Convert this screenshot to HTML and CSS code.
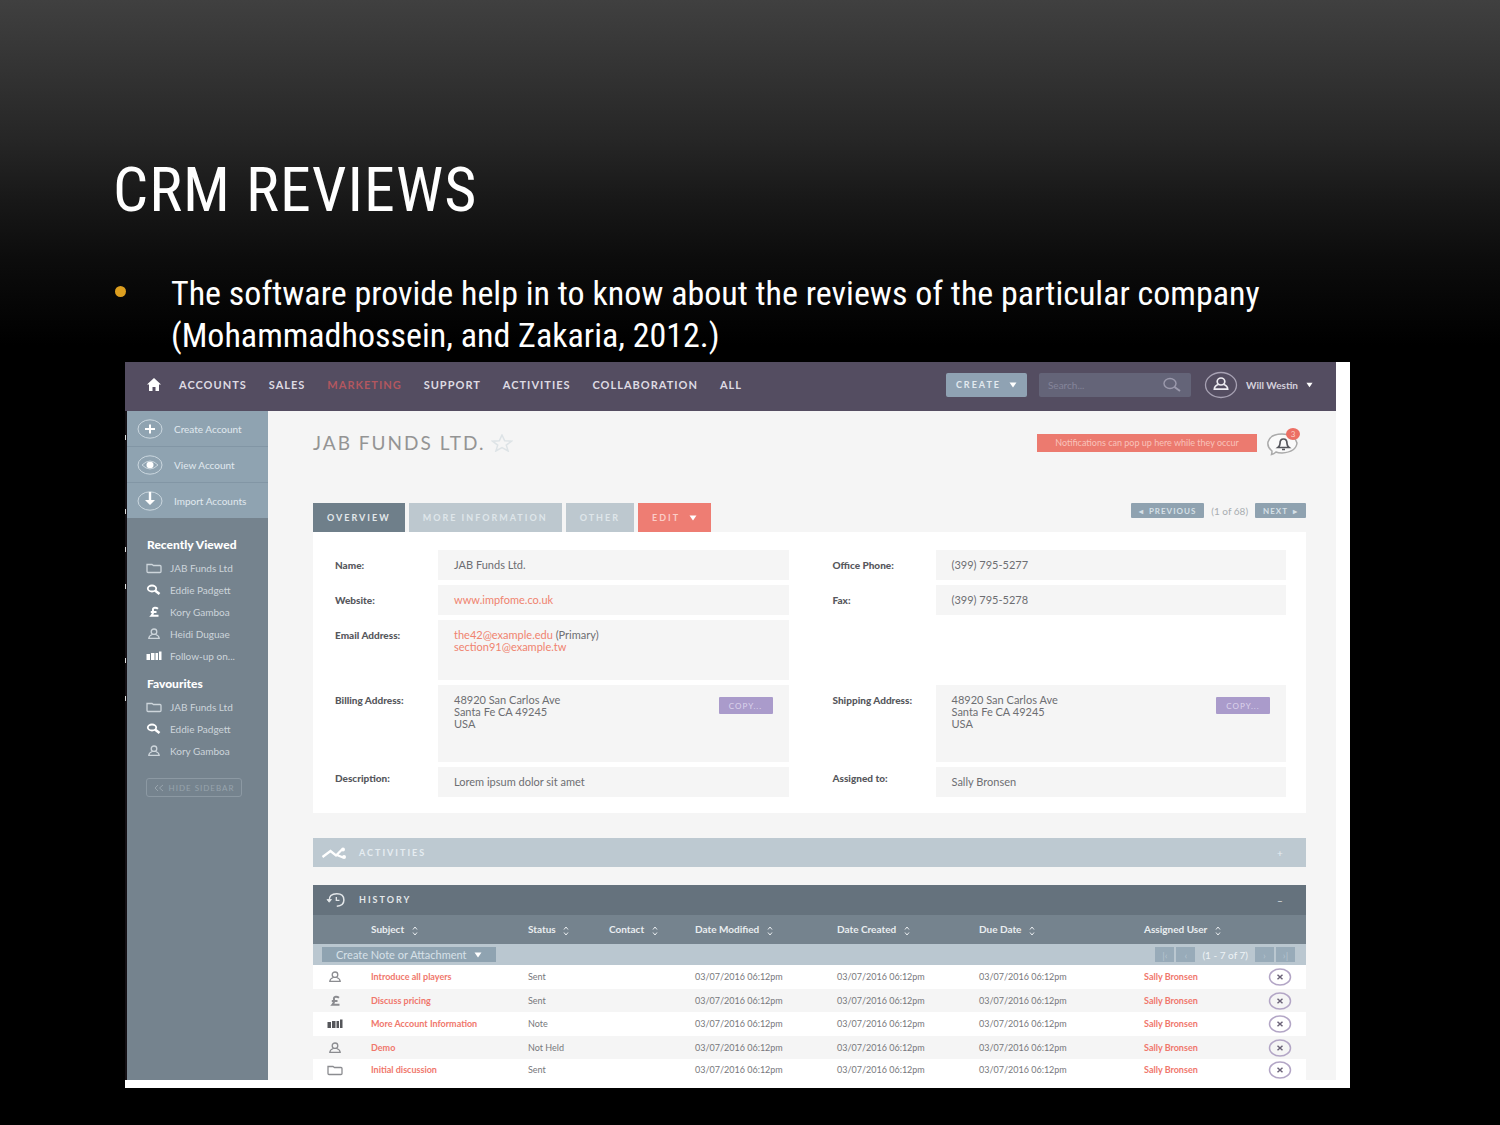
FILE: index.html
```html
<!DOCTYPE html>
<html lang="en">
<head>
<meta charset="utf-8">
<title>CRM Reviews</title>
<link rel="stylesheet" href="styles.css">
</head>
<body>
<svg class="sprite" aria-hidden="true">
  <symbol id="folder" viewBox="0 0 16 12"><path d="M1 2.5h5l1.5 1H14q1 0 1 1V9.5q0 1-1 1H2q-1 0-1-1z" fill="none" stroke="currentColor" stroke-width="1.3"/></symbol>
  <symbol id="key" viewBox="0 0 16 12"><ellipse cx="6" cy="4.500" rx="4.200" ry="3" fill="none" stroke="currentColor" stroke-width="1.800"/><path d="M9 6.500l4.500 3.500" stroke="currentColor" stroke-width="2.600"/></symbol>
  <symbol id="pound" viewBox="0 0 16 12"><path d="M12 2.800Q10.500 1.600 8.700 1.800 6.500 2 7 4.500q.5 3-1.500 5.200h7M4.800 6h5.700" fill="none" stroke="currentColor" stroke-width="2"/></symbol>
  <symbol id="person" viewBox="0 0 16 12"><ellipse cx="8" cy="3.700" rx="2.800" ry="2.700" fill="none" stroke="currentColor" stroke-width="1.300"/><path d="M6.300 6.500Q3 7.500 2.800 10.300H13.200Q13 7.500 9.700 6.500" fill="none" stroke="currentColor" stroke-width="1.300"/></symbol>
  <symbol id="bars" viewBox="0 0 16 12"><path d="M.5 4H4v6H.5zM5 3h3.500v7H5zM9.500 3H12v7H9.500zM13 1.500h2.500V10H13z" fill="currentColor"/></symbol>
  <symbol id="remove" viewBox="0 0 24 18"><ellipse cx="12" cy="9" rx="10.500" ry="8" fill="none" stroke="#b3a6c6" stroke-width="1.500"/><path d="M9.500 6.800l5 4.400m0-4.400l-5 4.400" stroke="#6b6378" stroke-width="1.500"/></symbol>
  <symbol id="sort" viewBox="0 0 6 10"><path d="M1 3.500L3 1l2 2.500M1 6.500L3 9l2-2.500" fill="none" stroke="currentColor"/></symbol>
  <symbol id="caret" viewBox="0 0 8 6"><path d="M.5.5h7L4 5.500z" fill="currentColor"/></symbol>
</svg>

<main class="slide">
  <h1 class="slide-title">CRM REVIEWS</h1>
  <ul class="slide-points">
    <li>The software provide help in to know about the reviews of the particular company (Mohammadhossein, and Zakaria, 2012.)</li>
  </ul>

  <div class="shot">
    <div class="app">
      <header class="topbar">
        <nav class="nav">
          <a class="home" href="#" aria-label="Home"><svg viewBox="0 0 14 13"><path d="M7 0l7 6.500h-2V13H8.500V9h-3v4H2V6.500H0z" fill="#fff"/></svg></a>
          <a href="#">ACCOUNTS</a><a href="#">SALES</a><a class="current" href="#">MARKETING</a><a href="#">SUPPORT</a><a href="#">ACTIVITIES</a><a href="#">COLLABORATION</a><a href="#">ALL</a>
        </nav>
        <div class="tools">
          <button class="create" type="button">CREATE <svg class="caret"><use href="#caret"/></svg></button>
          <div class="search">
            <input type="text" placeholder="Search..." aria-label="Search">
            <svg viewBox="0 0 20 16"><ellipse cx="8" cy="6.500" rx="6" ry="5" fill="none" stroke="#9c9aad" stroke-width="1.400"/><path d="M12.500 10l5.500 4" stroke="#9c9aad" stroke-width="2"/></svg>
          </div>
          <button class="user" type="button">
            <svg viewBox="0 0 34 28"><ellipse cx="17" cy="14" rx="15.500" ry="12.500" fill="none" stroke="#a7a1b3" stroke-width="1.300"/><ellipse cx="17" cy="10.500" rx="3.800" ry="3.500" fill="none" stroke="#eeecf2" stroke-width="1.700"/><path d="M14.500 13.500Q10.500 14.500 10.300 18.200H23.700Q23.500 14.500 19.500 13.500" fill="none" stroke="#eeecf2" stroke-width="1.700"/></svg>
            Will Westin <svg class="caret"><use href="#caret"/></svg>
          </button>
        </div>
      </header>

      <div class="body">
        <aside class="sidebar">
          <ul class="actions">
            <li><a href="#"><svg viewBox="0 0 26 20"><ellipse cx="13" cy="10" rx="12" ry="9.200" fill="none" stroke="#cbd7df"/><path d="M13 5.500v9M8 10h10" stroke="#fff" stroke-width="2"/></svg>Create Account</a></li>
            <li><a href="#"><svg viewBox="0 0 26 20"><ellipse cx="13" cy="10" rx="12" ry="9.200" fill="none" stroke="#cbd7df"/><path d="M5 10q8-8 16 0-8 8-16 0z" fill="none" stroke="#cbd7df"/><ellipse cx="13" cy="10" rx="3.500" ry="3.300" fill="#fff"/></svg>View Account</a></li>
            <li><a href="#"><svg viewBox="0 0 26 20"><ellipse cx="13" cy="10" rx="12" ry="9.200" fill="none" stroke="#cbd7df"/><path d="M11.800 1h2.400v8H18l-5 5-5-5h3.800z" fill="#fff"/></svg>Import Accounts</a></li>
          </ul>
          <h2>Recently Viewed</h2>
          <ul class="links">
            <li><a href="#"><svg><use href="#folder"/></svg>JAB Funds Ltd</a></li>
            <li><a href="#"><svg class="strong"><use href="#key"/></svg>Eddie Padgett</a></li>
            <li><a href="#"><svg class="strong"><use href="#pound"/></svg>Kory Gamboa</a></li>
            <li><a href="#"><svg><use href="#person"/></svg>Heidi Duguae</a></li>
            <li><a href="#"><svg class="strong"><use href="#bars"/></svg>Follow-up on...</a></li>
          </ul>
          <h2>Favourites</h2>
          <ul class="links">
            <li><a href="#"><svg><use href="#folder"/></svg>JAB Funds Ltd</a></li>
            <li><a href="#"><svg class="strong"><use href="#key"/></svg>Eddie Padgett</a></li>
            <li><a href="#"><svg><use href="#person"/></svg>Kory Gamboa</a></li>
          </ul>
          <button class="hide" type="button"><svg viewBox="0 0 10 8"><path d="M4 1L1 4l3 3M9 1L5.500 4 9 7" fill="none" stroke="currentColor"/></svg>HIDE SIDEBAR</button>
        </aside>

        <div class="content">
          <div class="heading">
            <h2>JAB FUNDS LTD.</h2>
            <svg class="star" viewBox="0 0 22 18"><path d="M11 1l2.700 5.700 6.800.5-5.200 3.900 1.800 5.900-6.100-3.300-6.100 3.300 1.800-5.900L1.500 7.200l6.800-.5z" fill="none" stroke="#dde3e6" stroke-width="1.500"/></svg>
            <div class="alert">Notifications can pop up here while they occur</div>
            <button class="bell" type="button" aria-label="Notifications">
              <svg viewBox="0 0 34 28"><path d="M6 22Q1 18 2 13 4 5 16 5t15 9q-1 9-15 10-4 0-6-1-2 2-4.500 2.500Q6 24 6 22z" fill="#fafafa" stroke="#aaa" stroke-width="1.500"/><path d="M12 18.500h11Q21 17 21 14.500q0-4.500-3.500-4.500T14 14.500Q14 17 12 18.500zM16 20.500h3" fill="none" stroke="#55565c" stroke-width="1.700"/></svg>
              <span>3</span>
            </button>
          </div>

          <div class="tabs">
            <button class="tab tab-on" type="button">OVERVIEW</button>
            <button class="tab" type="button">MORE INFORMATION</button>
            <button class="tab" type="button">OTHER</button>
            <button class="tab tab-edit" type="button">EDIT <svg class="caret"><use href="#caret"/></svg></button>
            <div class="pager">
              <button type="button"><span>◂</span>PREVIOUS</button>
              <span class="count">(1 of 68)</span>
              <button type="button">NEXT<span>▸</span></button>
            </div>
          </div>

          <div class="panel">
            <dl class="column">
              <dt>Name:</dt><dd>JAB Funds Ltd.</dd>
              <dt>Website:</dt><dd><a href="#">www.impfome.co.uk</a></dd>
              <dt>Email Address:</dt><dd class="tall"><p><a href="#">the42@example.edu</a> (Primary)<br><a href="#">section91@example.tw</a></p></dd>
              <dt>Billing Address:</dt><dd class="address"><p>48920 San Carlos Ave<br>Santa Fe CA 49245<br>USA</p><button type="button">COPY...</button></dd>
              <dt class="last">Description:</dt><dd>Lorem ipsum dolor sit amet</dd>
            </dl>
            <dl class="column">
              <dt>Office Phone:</dt><dd>(399) 795-5277</dd>
              <dt>Fax:</dt><dd>(399) 795-5278</dd>
              <dt class="gap">Shipping Address:</dt><dd class="address gap"><p>48920 San Carlos Ave<br>Santa Fe CA 49245<br>USA</p><button type="button">COPY...</button></dd>
              <dt class="last">Assigned to:</dt><dd>Sally Bronsen</dd>
            </dl>
          </div>

          <section class="bar bar-light">
            <svg viewBox="0 0 28 14"><path d="M1.500 11l8-6 5.500 4.500L21 3.500M16 9l6 2.500" fill="none" stroke="#fff" stroke-width="2.300"/><circle cx="22" cy="3.500" r="2" fill="#fff"/><circle cx="23" cy="11" r="2" fill="#fff"/></svg>
            <h3>ACTIVITIES</h3><button type="button" aria-label="Expand">+</button>
          </section>

          <section class="history">
            <div class="bar bar-dark">
              <svg viewBox="0 0 28 18"><path d="M7.500 10Q7 2 16 2q8 0 8 7 0 6.500-8 7" fill="none" stroke="#e3e7ea" stroke-width="1.700"/><path d="M5 8.500h5L7.500 11.500z" fill="#e3e7ea" stroke="#e3e7ea"/><path d="M15.500 5.500V9.500H19" fill="none" stroke="#e3e7ea" stroke-width="1.500"/></svg>
              <h3>HISTORY</h3><button type="button" aria-label="Collapse">–</button>
            </div>
            <table>
              <colgroup><col class="c-icon"><col class="c-subject"><col class="c-status"><col class="c-contact"><col class="c-date"><col class="c-date"><col class="c-due"><col class="c-user"><col></colgroup>
              <thead>
                <tr><th></th><th>Subject <svg><use href="#sort"/></svg></th><th>Status <svg><use href="#sort"/></svg></th><th>Contact <svg><use href="#sort"/></svg></th><th>Date Modified <svg><use href="#sort"/></svg></th><th>Date Created <svg><use href="#sort"/></svg></th><th>Due Date <svg><use href="#sort"/></svg></th><th>Assigned User <svg><use href="#sort"/></svg></th><th></th></tr>
                <tr class="toolbar"><td colspan="9"><div>
                  <button class="note" type="button">Create Note or Attachment <svg class="caret"><use href="#caret"/></svg></button>
                  <button class="step" type="button" aria-label="First">|‹</button><button class="step" type="button" aria-label="Previous">‹</button>
                  <span>(1 - 7 of 7)</span>
                  <button class="step" type="button" aria-label="Next">›</button><button class="step" type="button" aria-label="Last">›|</button>
                </div></td></tr>
              </thead>
              <tbody>
                <tr><td><svg><use href="#person"/></svg></td><td><a href="#">Introduce all players</a></td><td>Sent</td><td></td><td>03/07/2016 06:12pm</td><td>03/07/2016 06:12pm</td><td>03/07/2016 06:12pm</td><td><a href="#">Sally Bronsen</a></td><td><button type="button" aria-label="Remove"><svg><use href="#remove"/></svg></button></td></tr>
                <tr><td><svg><use href="#pound"/></svg></td><td><a href="#">Discuss pricing</a></td><td>Sent</td><td></td><td>03/07/2016 06:12pm</td><td>03/07/2016 06:12pm</td><td>03/07/2016 06:12pm</td><td><a href="#">Sally Bronsen</a></td><td><button type="button" aria-label="Remove"><svg><use href="#remove"/></svg></button></td></tr>
                <tr><td><svg class="ink"><use href="#bars"/></svg></td><td><a href="#">More Account Information</a></td><td>Note</td><td></td><td>03/07/2016 06:12pm</td><td>03/07/2016 06:12pm</td><td>03/07/2016 06:12pm</td><td><a href="#">Sally Bronsen</a></td><td><button type="button" aria-label="Remove"><svg><use href="#remove"/></svg></button></td></tr>
                <tr><td><svg><use href="#person"/></svg></td><td><a href="#">Demo</a></td><td>Not Held</td><td></td><td>03/07/2016 06:12pm</td><td>03/07/2016 06:12pm</td><td>03/07/2016 06:12pm</td><td><a href="#">Sally Bronsen</a></td><td><button type="button" aria-label="Remove"><svg><use href="#remove"/></svg></button></td></tr>
                <tr><td><svg><use href="#folder"/></svg></td><td><a href="#">Initial discussion</a></td><td>Sent</td><td></td><td>03/07/2016 06:12pm</td><td>03/07/2016 06:12pm</td><td>03/07/2016 06:12pm</td><td><a href="#">Sally Bronsen</a></td><td><button type="button" aria-label="Remove"><svg><use href="#remove"/></svg></button></td></tr>
              </tbody>
            </table>
          </section>
        </div>
      </div>
    </div>
  </div>
</main>
</body>
</html>
```

FILE: styles.css
```css
* { box-sizing: border-box; }
html { background: #000; }
body {
  margin: 0;
  min-height: 100vh;
  background: linear-gradient(#404040, #262626 140px, #181818 200px, #0c0c0c 260px, #000 345px);
  color: #fff;
  font-family: Lato, "Open Sans", sans-serif;
  font-size: 10px;
  line-height: 12px;
}
h1, h2, h3, p, ul, dl, dd { margin: 0; padding: 0; }
ul { list-style: none; }
a { color: inherit; text-decoration: none; }
button { border: 0; padding: 0; background: none; color: inherit; font: inherit; }
svg { display: block; flex: none; }
.sprite { position: absolute; width: 0; height: 0; }

/* slide text */
.slide { padding: 154px 150px 36px 113px; }
.slide-title {
  font: 400 62px/72px "Roboto Condensed", "Liberation Sans", sans-serif;
  letter-spacing: 1px;
}
.slide-points {
  padding: 46px 0 0 2px;
  font: 400 34px/42px "Roboto Condensed", "Liberation Sans", sans-serif;
}
.slide-points li { display: flex; }
.slide-points li::before {
  content: "";
  flex: none;
  width: 11px;
  height: 11px;
  margin: 14px 45px 0 0;
  border-radius: 50%;
  background: #dc9e1f;
}

/* application frame */
.shot { margin: 6px 0 0 12px; padding: 0 14px 8px 0; background: #fff; }
.body {
  display: flex;
  padding-left: 2px;
  background:
    linear-gradient(#ddd, #ddd) 0 24px / 1px 5px no-repeat,
    linear-gradient(#ddd, #ddd) 0 98px / 1px 5px no-repeat,
    linear-gradient(#ddd, #ddd) 0 136px / 1px 5px no-repeat,
    linear-gradient(#ddd, #ddd) 0 173px / 1px 5px no-repeat,
    linear-gradient(#ddd, #ddd) 0 247px / 1px 5px no-repeat,
    linear-gradient(#ddd, #ddd) 0 285px / 1px 5px no-repeat,
    #141014;
}
.caret { width: 8px; height: 6px; }

.topbar {
  display: flex;
  justify-content: space-between;
  align-items: center;
  height: 49px;
  padding: 0 23px 4px 22px;
  background: #544d61;
}
.nav { display: flex; align-items: center; gap: 22px; color: #dedbe3; font-size: 11px; font-weight: 700; letter-spacing: 1px; }
.nav .home { margin-right: -4px; }
.home svg { width: 14px; height: 13px; }
.nav .current { color: #b2575f; }
.tools { display: flex; align-items: center; gap: 12px; }
.create {
  display: flex;
  align-items: center;
  justify-content: center;
  gap: 8px;
  width: 81px;
  height: 24px;
  border-radius: 2px;
  background: #8fa2b3;
  color: #e3eaf0;
  font-size: 9px;
  font-weight: 700;
  letter-spacing: 2px;
}
.create .caret { color: #fff; }
.search { display: flex; align-items: center; width: 152px; height: 24px; padding: 0 9px; border-radius: 2px; background: #646478; }
.search input { flex: 1; min-width: 0; padding: 0; border: 0; outline: 0; background: none; color: #fff; font: inherit; }
.search input::placeholder { color: #85859a; opacity: 1; }
.search svg { width: 20px; height: 16px; }
.user { display: flex; align-items: center; gap: 8px; margin-left: 1px; color: #d5d1dc; font-weight: 700; }
.user svg { width: 34px; height: 28px; }
.user .caret { width: 7px; height: 6px; color: #fff; }

/* sidebar */
.sidebar { flex: none; width: 141px; background: #75838e; color: #cdd5db; }
.actions { background: #8fa3b1; }
.actions a { display: flex; align-items: center; gap: 11px; height: 36px; padding-left: 10px; border-bottom: 1px solid #8296a5; color: #e0e9ef; }
.actions li:last-child a { height: 35px; border: 0; }
.actions svg { width: 26px; height: 20px; }
.sidebar h2 { padding: 20px 0 5px 20px; color: #fff; font-size: 12px; line-height: 14px; font-weight: 900; }
.sidebar .links + h2 { padding-top: 10px; }
.links a { display: flex; align-items: center; gap: 8px; height: 22px; padding-left: 19px; }
.links svg { width: 16px; height: 12px; }
.links .strong { color: #fff; }
.hide {
  display: flex;
  align-items: center;
  justify-content: center;
  gap: 5px;
  width: 96px;
  height: 19px;
  margin: 16px 0 0 19px;
  border: 1px solid #8c99a3;
  border-radius: 3px;
  color: #98a4ad;
  font-size: 8px;
  letter-spacing: 1px;
}
.hide svg { width: 10px; height: 8px; }

/* record view */
.content { flex: 1; min-width: 0; padding: 17px 30px 0 45px; background: #f5f5f5; }
.heading { display: flex; align-items: center; height: 30px; margin-bottom: 45px; }
.heading h2 { color: #949494; font-size: 19px; line-height: 22px; font-weight: 400; letter-spacing: 2px; }
.star { width: 22px; height: 18px; margin-left: 6px; }
.alert { width: 220px; margin-left: auto; padding: 3px 0; background: #ec7a6f; color: #f8c3bb; font-size: 9px; text-align: center; }
.bell { position: relative; width: 34px; height: 28px; margin: 0 6px 0 9px; }
.bell span { position: absolute; top: -1px; right: 0; width: 14px; height: 12px; border-radius: 50%; background: #ec6f64; color: #fbd0ca; font-size: 8px; }
.tabs { display: flex; align-items: flex-start; gap: 4px; }
.tab {
  height: 29px;
  padding: 0 14px;
  background: #bdc8cf;
  color: #dfe6ea;
  font-size: 9px;
  font-weight: 700;
  letter-spacing: 2px;
}
.tab-on { background: #6f7f8a; color: #e3e8eb; }
.tab-edit { display: flex; align-items: center; gap: 9px; background: #ee7d73; color: #fbcdc7; }
.tab-edit .caret { color: #fff; }
.pager { display: flex; align-items: center; gap: 7px; margin-left: auto; color: #a8adb1; }
.pager button { display: flex; gap: 5px; height: 15px; padding: 2px 8px; border-radius: 1px; background: #8fa2b0; color: #d6e0e7; font-size: 8px; font-weight: 700; letter-spacing: 1px; }

.panel { display: grid; grid-template-columns: 1fr 1fr; gap: 44px; padding: 18px 20px 16px 22px; background: #fff; color: #6d6e72; font-size: 11px; }
.column { display: grid; grid-template-columns: 103px 1fr; gap: 5px 0; align-content: start; }
.column dt { padding-top: 9px; color: #57585d; font-size: 10px; font-weight: 900; }
.column .last { padding-top: 5px; }
.column dd { display: flex; justify-content: space-between; align-items: flex-start; min-height: 30px; padding: 9px 16px; background: #f5f5f5; }
.column a { color: #f0836f; }
.column .tall { min-height: 60px; }
.column .address { min-height: 77px; }
.column .gap { margin-top: 65px; }
.address button { width: 54px; height: 17px; margin-top: 3px; border-radius: 1px; background: #aa9bcb; color: #ddd4ec; font-size: 8px; letter-spacing: 1px; }

/* subpanels */
.bar { display: flex; align-items: center; gap: 10px; height: 29px; padding: 0 20px 0 8px; }
.bar svg { width: 28px; height: 16px; }
.bar h3 { font-size: 9px; line-height: 12px; font-weight: 700; letter-spacing: 2px; }
.bar button { width: 12px; margin-left: auto; }
.bar-light { margin: 25px 0 18px; background: #bdc9d1; color: #e6edf1; }
.bar-dark { height: 30px; background: #65727d; color: #e3e7ea; }

table { width: 100%; table-layout: fixed; border-collapse: collapse; color: #77787c; }
.c-icon { width: 58px; }
.c-subject { width: 157px; }
.c-status { width: 81px; }
.c-contact { width: 86px; }
.c-date { width: 142px; }
.c-due { width: 165px; }
.c-user { width: 111px; }
th, td { padding: 0; text-align: left; white-space: nowrap; }
th { height: 29px; background: #75838e; color: #e9edf0; }
th svg { display: inline-block; width: 6px; height: 10px; margin-left: 5px; vertical-align: middle; }
.toolbar div { display: flex; align-items: center; gap: 2px; height: 21px; padding: 0 11px 0 9px; background: #bac7d0; color: #eef3f6; }
.toolbar span { margin: 0 5px; }
.note { display: flex; align-items: center; gap: 7px; height: 15px; margin-right: auto; padding: 0 14px; background: #8fa3b1; color: #d7e1e8; font-size: 11px; }
.note .caret { color: #fff; }
.step { width: 19px; height: 15px; background: #98abb9; color: #b5c4cf; line-height: 10px; }
tbody { font-size: 9px; }
tbody tr { height: 24px; background: #fff; }
tbody tr:nth-child(even) { height: 23px; background: #f5f5f5; }
tbody tr:last-child { height: 21px; }
tbody a { color: #f0776c; font-weight: 700; }
tbody td:first-child svg { width: 16px; height: 12px; margin-left: 14px; color: #8b8c90; }
tbody td:first-child .ink { color: #55565a; }
tbody button { display: block; margin-left: 13px; }
tbody button svg { width: 24px; height: 18px; }
```
